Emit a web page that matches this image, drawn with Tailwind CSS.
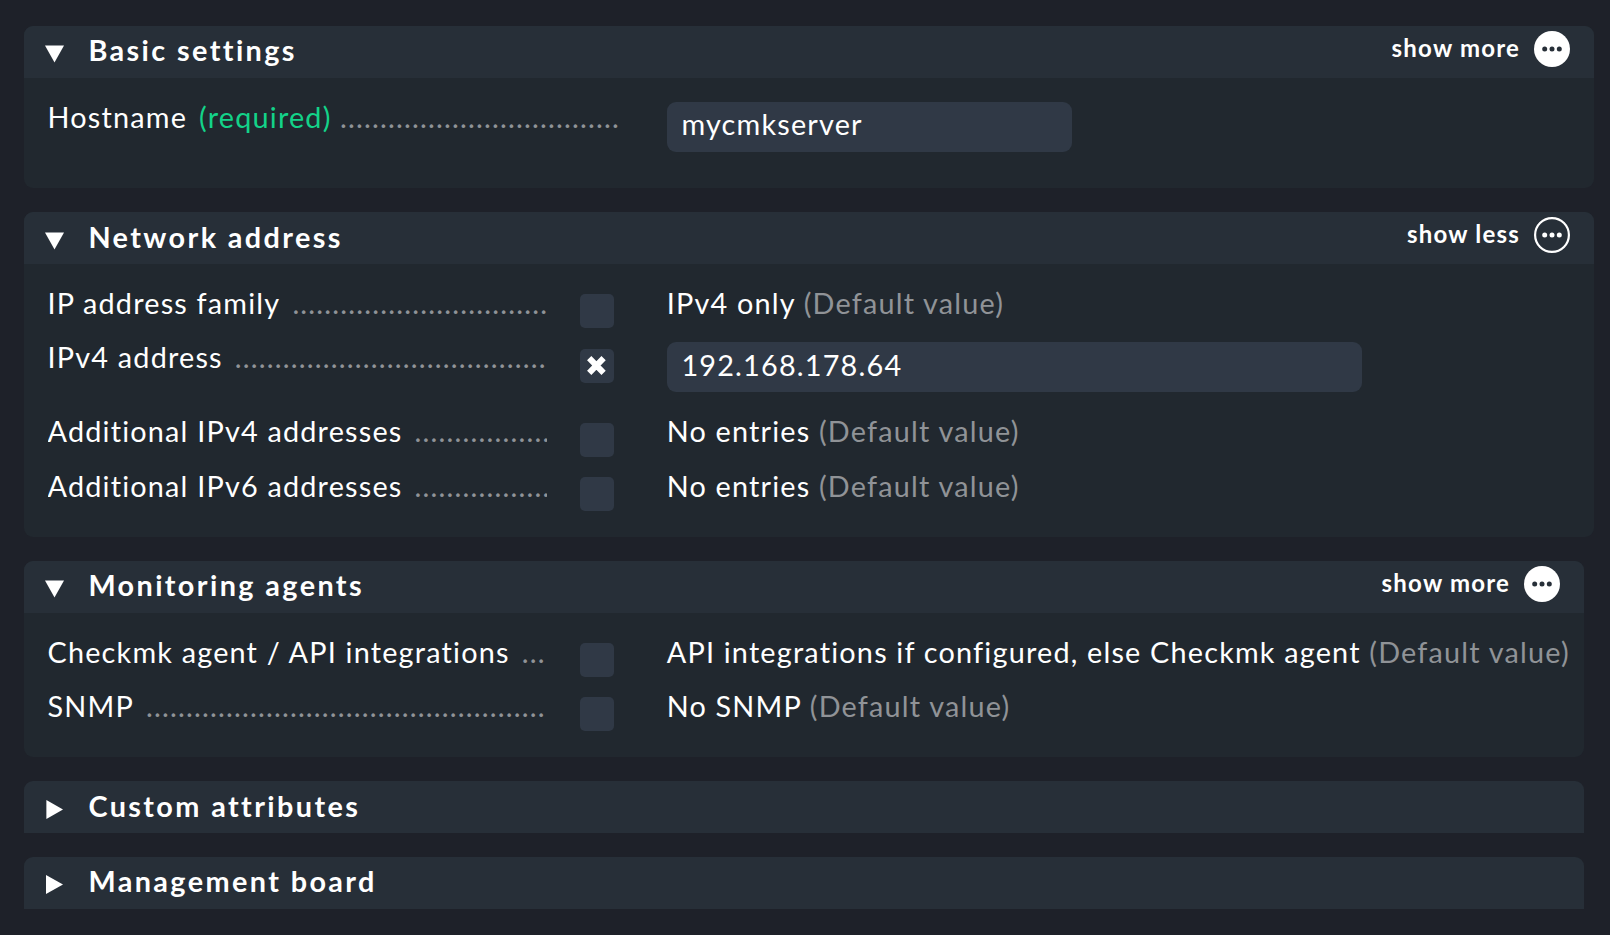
<!DOCTYPE html>
<html lang="en">
<head>
<meta charset="utf-8">
<title>Host properties</title>
<script src="https://cdn.jsdelivr.net/npm/@tailwindcss/browser@4"></script>
</head>
<body class="h-[935px] overflow-hidden bg-[#1e2129] pt-[26px] pl-6 font-['Lato',sans-serif] text-[28.8px] leading-9 tracking-[1.2px] whitespace-nowrap text-white">
<main class="flex flex-col gap-6">

  <!-- Basic settings -->
  <section class="h-[162px] w-[1570px] overflow-hidden rounded-[9px] bg-[#21282f]">
    <header class="flex h-[52px] items-start bg-[#272f38] pr-6 pl-[21px]">
      <svg class="mt-[19px] h-[18px] w-[19px]" viewBox="0 0 19 18"><path d="M0 .4H19L9.5 17.4Z" fill="#fff"/></svg>
      <h2 class="ml-[24.4px] leading-[48px] font-bold tracking-[2.4px]">Basic settings</h2>
      <span class="ml-auto text-[24px] leading-[44px] font-bold">show more</span>
      <svg class="mt-[5px] ml-[14px] size-9" viewBox="0 0 36 36"><circle cx="18" cy="18" r="18" fill="#fff"/><g fill="#272f38"><circle cx="10.7" cy="18" r="2.5"/><circle cx="18" cy="18" r="2.5"/><circle cx="25.3" cy="18" r="2.5"/></g></svg>
    </header>
    <div class="pt-[21px] pl-[23.5px]">
      <div class="flex items-start">
        <div class="flex w-[572.5px] overflow-hidden"><span>Hostname</span><span class="ml-3 text-[#13d389]">(required)</span><span class="ml-[8.5px] text-[#909397]">...................................</span></div>
        <div class="mt-[3px] ml-[47px] h-[50px] w-[405px] rounded-[9px] bg-[#303946] pl-[14.4px] leading-[44px]">mycmkserver</div>
      </div>
    </div>
  </section>

  <!-- Network address -->
  <section class="h-[325px] w-[1570px] overflow-hidden rounded-[9px] bg-[#21282f]">
    <header class="flex h-[52px] items-start bg-[#272f38] pr-6 pl-[21px]">
      <svg class="mt-5 h-[18px] w-[19px]" viewBox="0 0 19 18"><path d="M0 .4H19L9.5 17.4Z" fill="#fff"/></svg>
      <h2 class="ml-[24.4px] leading-[50px] font-bold tracking-[2.4px]">Network address</h2>
      <span class="ml-auto text-[24px] leading-[44px] font-bold">show less</span>
      <svg class="mt-[5px] ml-[14px] size-9" viewBox="0 0 36 36"><circle cx="18" cy="18" r="16.9" fill="none" stroke="#fff" stroke-width="2.2"/><g fill="#fff"><circle cx="10.7" cy="18" r="2.5"/><circle cx="18" cy="18" r="2.5"/><circle cx="25.3" cy="18" r="2.5"/></g></svg>
    </header>
    <div class="pt-[21px] pl-[23.5px]">
      <div class="flex h-[54px] items-start">
        <div class="flex w-[499.5px] overflow-hidden"><span>IP address family</span><span class="ml-3 text-[#909397]">................................</span></div>
        <div class="mt-[9px] ml-[33px] size-[34px] rounded-[5px] bg-[#303946]"></div>
        <div class="ml-[52.7px]">IPv4 only <span class="text-[#909397]">(Default value)</span></div>
      </div>
      <div class="flex h-[74px] items-start">
        <div class="flex w-[499.5px] overflow-hidden"><span>IPv4 address</span><span class="ml-3 text-[#909397]">.......................................</span></div>
        <div class="mt-[10px] ml-[33px] size-[34px] rounded-[5px] bg-[#303946]">
          <svg class="size-[34px]" viewBox="0 0 34 34"><path d="M9.2 9.2L23.6 23.8M23.6 9.2L9.2 23.8" stroke="#fff" stroke-width="6"/></svg>
        </div>
        <div class="mt-[3px] ml-[53px] h-[50px] w-[695px] rounded-[9px] bg-[#303946] pl-[14.4px] leading-[46px]">192.168.178.64</div>
      </div>
      <div class="flex h-[55px] items-start">
        <div class="flex w-[499.5px] overflow-hidden"><span>Additional IPv4 addresses</span><span class="ml-3 text-[#909397]">.................</span></div>
        <div class="mt-[10px] ml-[33px] size-[34px] rounded-[5px] bg-[#303946]"></div>
        <div class="ml-[52.7px]">No entries <span class="text-[#909397]">(Default value)</span></div>
      </div>
      <div class="flex items-start">
        <div class="flex w-[499.5px] overflow-hidden"><span>Additional IPv6 addresses</span><span class="ml-3 text-[#909397]">.................</span></div>
        <div class="mt-[9px] ml-[33px] size-[34px] rounded-[5px] bg-[#303946]"></div>
        <div class="ml-[52.7px]">No entries <span class="text-[#909397]">(Default value)</span></div>
      </div>
    </div>
  </section>

  <!-- Monitoring agents -->
  <section class="h-[196px] w-[1560px] overflow-hidden rounded-[9px] bg-[#21282f]">
    <header class="flex h-[52px] items-start bg-[#272f38] pr-6 pl-[21px]">
      <svg class="mt-[19px] h-[18px] w-[19px]" viewBox="0 0 19 18"><path d="M0 .4H19L9.5 17.4Z" fill="#fff"/></svg>
      <h2 class="ml-[24.4px] leading-[48px] font-bold tracking-[2.4px]">Monitoring agents</h2>
      <span class="ml-auto text-[24px] leading-[44px] font-bold">show more</span>
      <svg class="mt-[5px] ml-[14px] size-9" viewBox="0 0 36 36"><circle cx="18" cy="18" r="18" fill="#fff"/><g fill="#272f38"><circle cx="10.7" cy="18" r="2.5"/><circle cx="18" cy="18" r="2.5"/><circle cx="25.3" cy="18" r="2.5"/></g></svg>
    </header>
    <div class="pt-[21px] pl-[23.5px]">
      <div class="flex h-[54px] items-start">
        <div class="flex w-[499.5px] overflow-hidden"><span>Checkmk agent / API integrations</span><span class="ml-3 text-[#909397]">...</span></div>
        <div class="mt-[9px] ml-[33px] size-[34px] rounded-[5px] bg-[#303946]"></div>
        <div class="ml-[52.7px]">API integrations if configured, else Checkmk agent <span class="text-[#909397]">(Default value)</span></div>
      </div>
      <div class="flex items-start">
        <div class="flex w-[499.5px] overflow-hidden"><span>SNMP</span><span class="ml-3 text-[#909397]">..................................................</span></div>
        <div class="mt-[9px] ml-[33px] size-[34px] rounded-[5px] bg-[#303946]"></div>
        <div class="ml-[52.7px]">No SNMP <span class="text-[#909397]">(Default value)</span></div>
      </div>
    </div>
  </section>

  <!-- Collapsed sections -->
  <section class="flex h-[52px] w-[1560px] items-start rounded-t-[9px] bg-[#272f38] pl-[22px]">
    <svg class="mt-[19px] h-[19px] w-[17px]" viewBox="0 0 17 19"><path d="M.4 0V19L17 9.5Z" fill="#fff"/></svg>
    <h2 class="ml-[25.4px] leading-[50px] font-bold tracking-[2.4px]">Custom attributes</h2>
  </section>
  <section class="flex h-[52px] w-[1560px] items-start rounded-t-[9px] bg-[#272f38] pl-[22px]">
    <svg class="mt-[18.4px] h-[19px] w-[17px]" viewBox="0 0 17 19"><path d="M0 0V19L17 9.5Z" fill="#fff"/></svg>
    <h2 class="ml-[25.4px] leading-[48px] font-bold tracking-[2.4px]">Management board</h2>
  </section>
</main>
</body>
</html>
